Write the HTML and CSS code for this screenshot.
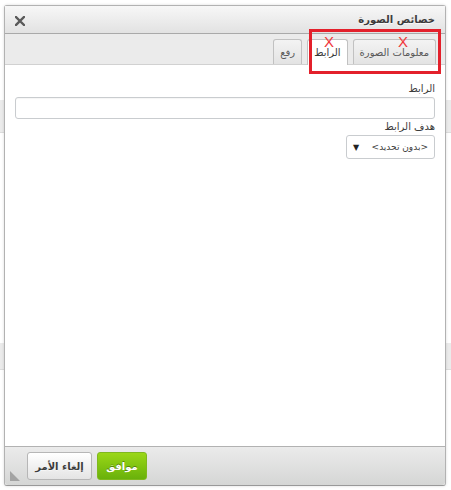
FILE: index.html
```html
<!DOCTYPE html>
<html lang="ar">
<head>
    <meta charset="UTF-8">
    <meta name="viewport" content="width=device-width, initial-scale=1.0">
    <title>خصائص الصورة</title>
    <link rel="stylesheet" href="styles.css">
</head>
<body>
    <div class="page">
        <div class="band band-top"></div>
        <div class="band band-mid"></div>
    </div>

    <div class="dialog" dir="rtl">
        <div class="dialog-title">
            <span>خصائص الصورة</span>
            <a class="close" href="#">
                <svg width="10" height="10" viewBox="0 0 10 10">
                    <path d="M1 1 L9 9 M9 1 L1 9" stroke="#5a5a5a" stroke-width="2.4" stroke-linecap="square"/>
                </svg>
            </a>
        </div>
        <div class="tabs">
            <a class="tab" href="#">معلومات الصورة</a>
            <a class="tab active" href="#">الرابط</a>
            <a class="tab" href="#">رفع</a>
        </div>
        <div class="dialog-content">
            <label>الرابط</label>
            <input type="text" class="field">
            <label>هدف الرابط</label>
            <div class="select">
                <span>&lt;بدون تحديد&gt;</span>
                <span class="arrow">▼</span>
            </div>
        </div>
        <div class="dialog-footer">
            <a class="btn btn-ok" href="#">موافق</a>
            <a class="btn btn-cancel" href="#">إلغاء الأمر</a>
            <span class="grip"></span>
        </div>

        <!-- annotation -->
        <div class="mark-box"></div>
        <span class="mark-x x1">X</span>
        <span class="mark-x x2">X</span>
    </div>
</body>
</html>
```

FILE: styles.css
```css
* {
    margin: 0;
    padding: 0;
    box-sizing: border-box;
}
body {
    width: 451px;
    height: 490px;
    overflow: hidden;
    position: relative;
    background: #fff;
    font-family: "DejaVu Sans", Tahoma, sans-serif;
    color: #474747;
}
a {
    text-decoration: none;
    color: inherit;
}
.page {
    height: 100%;
    padding-top: 100px;
}
.band {
    height: 33px;
    background: #ebebeb;
    border-bottom: 1px solid #dcdcdc;
}
.band-mid {
    margin-top: 210px;
    height: 27px;
}
.dialog {
    position: absolute;
    left: 4px;
    top: 5px;
    width: 442px;
    height: 481px;
    background: #fff;
    border: 1px solid #b2b2b2;
    border-bottom-color: #999;
    border-radius: 3px;
    box-shadow: 0 0 3px rgba(0, 0, 0, 0.15);
    display: flex;
    flex-direction: column;
}
.dialog-title {
    height: 28px;
    flex-shrink: 0;
    display: flex;
    align-items: center;
    justify-content: space-between;
    padding: 0 10px 0 10px;
    background: linear-gradient(#f7f7f7, #e2e2e2);
    border-bottom: 1px solid #a9a9a9;
    font-size: 10px;
    font-weight: bold;
    color: #3c3c3c;
    text-shadow: 0 1px 0 rgba(255, 255, 255, 0.75);
}
.close {
    display: flex;
    margin-top: 2px;
}
.tabs {
    height: 31px;
    flex-shrink: 0;
    display: flex;
    align-items: flex-end;
    gap: 5px;
    padding: 0 9px;
    background: #ebebeb;
    border-bottom: 1px solid #d1d1d1;
}
.tab {
    height: 25px;
    padding: 0 6px;
    display: flex;
    align-items: center;
    font-size: 10px;
    color: #595959;
    white-space: nowrap;
    background: linear-gradient(#f3f3f3, #e3e3e3);
    border: 1px solid #c1c1c1;
    border-bottom: none;
    border-radius: 3px 3px 0 0;
}
.tab.active {
    height: 26px;
    margin-bottom: -1px;
    background: #fff;
    color: #383838;
}
.dialog-content {
    flex: 1;
    padding: 17px 10px 0;
    background: #fff;
}
.dialog-content label {
    display: block;
    font-size: 10px;
    line-height: 14px;
    color: #3c3c3c;
}
.field {
    display: block;
    width: 100%;
    height: 22px;
    margin: 1px 0 1px;
    border: 1px solid #c9cccf;
    border-radius: 3px;
    box-shadow: inset 0 1px 1px rgba(0, 0, 0, 0.04);
    outline: none;
}
.select {
    width: 89px;
    height: 24px;
    margin-top: 1px;
    display: flex;
    align-items: center;
    justify-content: space-between;
    padding: 0 6px 0 6px;
    font-size: 9px;
    white-space: nowrap;
    color: #3c3c3c;
    border: 1px solid #c9cccf;
    border-radius: 3px;
}
.select .arrow {
    font-size: 8px;
    color: #222;
}
.dialog-footer {
    height: 39px;
    flex-shrink: 0;
    position: relative;
    display: flex;
    justify-content: flex-end;
    gap: 5px;
    padding: 5px 22px 0;
    background: linear-gradient(#ebebeb, #d5d6d5);
    border-top: 1px solid #b2b2b2;
    border-radius: 0 0 3px 3px;
}
.btn {
    height: 28px;
    display: flex;
    align-items: center;
    justify-content: center;
    font-size: 10px;
    font-weight: bold;
    white-space: nowrap;
    border-radius: 3px;
}
.btn-ok {
    width: 50px;
    color: #fff;
    background: linear-gradient(#9ad717, #69b10b);
    border: 1px solid #7fb81e;
    text-shadow: 0 -1px 0 #55830c;
}
.btn-cancel {
    width: 65px;
    color: #3c3c3c;
    background: linear-gradient(#fff, #e4e4e4);
    border: 1px solid #b6b6b6;
    text-shadow: 0 1px 0 rgba(255, 255, 255, 0.5);
}
.grip {
    position: absolute;
    left: 5px;
    bottom: 4px;
    width: 0;
    height: 0;
    border-left: 10px solid transparent;
    border-bottom: 10px solid #a3a3a3;
    transform: scaleX(-1);
}
.mark-box {
    position: absolute;
    left: 304px;
    top: 23px;
    width: 132px;
    height: 45px;
    border: 3px solid #e3202b;
}
.mark-x {
    position: absolute;
    top: 27px;
    font-family: "Liberation Sans", Arial, sans-serif;
    font-size: 15px;
    color: #f0383c;
}
.x1 {
    left: 319px;
}
.x2 {
    left: 393px;
}
```
